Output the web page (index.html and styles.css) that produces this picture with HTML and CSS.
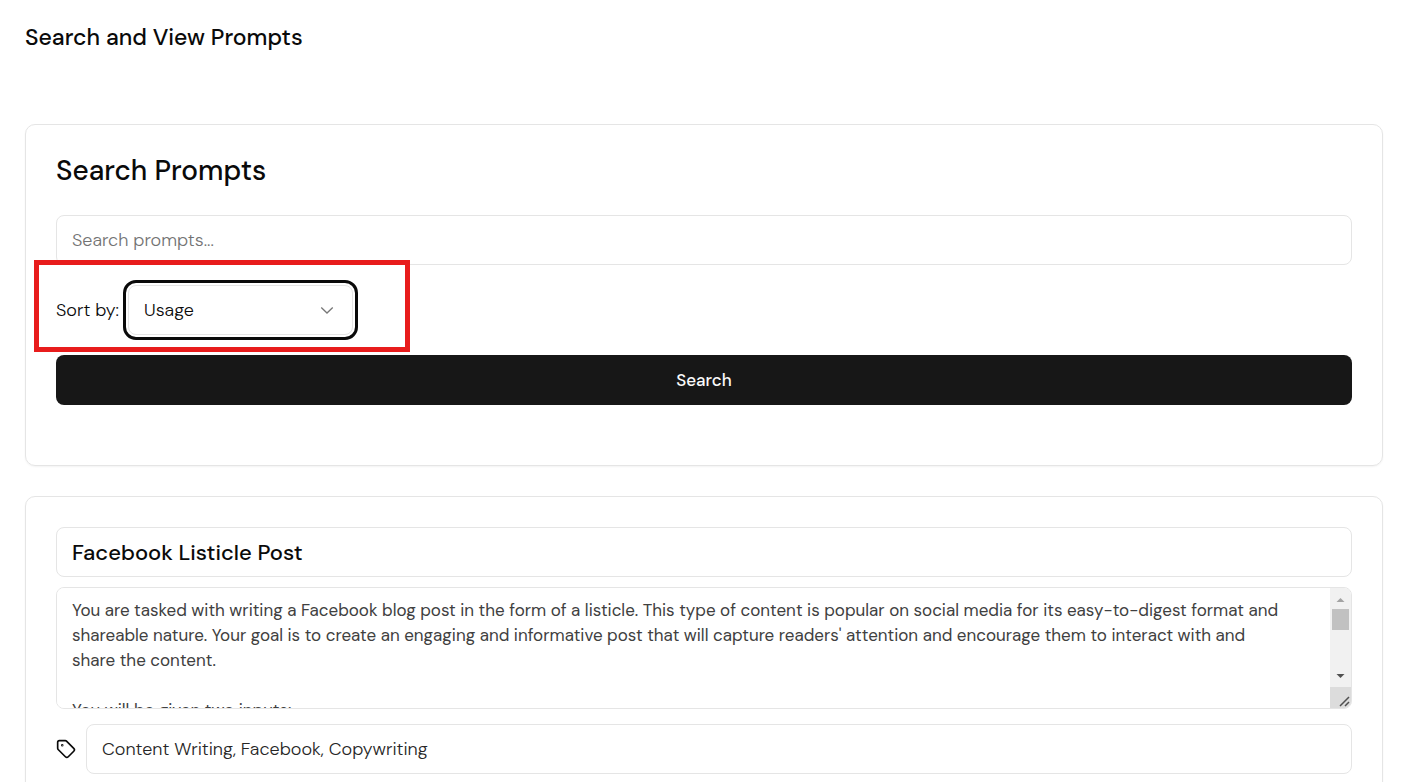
FILE: index.html
```html
<!DOCTYPE html>
<html lang="en">
<head>
<meta charset="UTF-8">
<meta name="viewport" content="width=device-width, initial-scale=1.0">
<link rel="stylesheet" href="styles.css">
<title>Search and View Prompts</title>
</head>
<body>
<h1 class="page-title">Search and View Prompts</h1>

<main class="cards">
  <form class="card search-card">
    <h2 class="card-title">Search Prompts</h2>
    <input class="field search-field" type="text" placeholder="Search prompts..." aria-label="Search prompts">
    <div class="sort-row">
      <label for="sort">Sort by:</label>
      <div class="select-wrap">
        <select id="sort" class="field sort-select">
          <option>Usage</option>
          <option>Name</option>
        </select>
        <svg class="chevron" viewBox="0 0 15 15" aria-hidden="true"><path d="M3.2 5.7 L7.5 9.8 L11.8 5.7" fill="none" stroke="currentColor"/></svg>
      </div>
      <div class="highlight"></div>
    </div>
    <button class="search-button" type="button">Search</button>
  </form>

  <section class="card prompt-card">
    <input class="field prompt-title" type="text" value="Facebook Listicle Post" aria-label="Prompt title">
    <div class="prompt-box">
      <textarea class="prompt-text" aria-label="Prompt text">You are tasked with writing a Facebook blog post in the form of a listicle. This type of content is popular on social media for its easy-to-digest format and shareable nature. Your goal is to create an engaging and informative post that will capture readers' attention and encourage them to interact with and share the content.

You will be given two inputs:</textarea>
      <div class="scrollbar" aria-hidden="true">
        <svg class="arrow-up" viewBox="0 0 21 21"><path d="M6.5 14 L10.5 10 L14.5 14z"/></svg>
        <div class="thumb"></div>
        <svg class="arrow-down" viewBox="0 0 21 21"><path d="M6.5 8 L14.5 8 L10.5 12z"/></svg>
        <svg class="grip" viewBox="0 0 21 21"><path d="M10 19 L19 10 M15 19 L19 15"/></svg>
      </div>
    </div>
    <div class="tag-row">
      <svg class="tag-icon" viewBox="0 0 24 24" aria-hidden="true">
        <path d="M12.586 2.586A2 2 0 0 0 11.172 2H4a2 2 0 0 0-2 2v7.172a2 2 0 0 0 .586 1.414l8.704 8.704a2.426 2.426 0 0 0 3.42 0l6.58-6.58a2.426 2.426 0 0 0 0-3.42z"/>
        <circle cx="7.5" cy="7.5" r=".5"/>
      </svg>
      <input class="field tag-field" type="text" value="Content Writing, Facebook, Copywriting" aria-label="Tags">
    </div>
  </section>
</main>
</body>
</html>
```
FILE: styles.css
```css
* {
  box-sizing: border-box;
}
html {
  overflow: hidden;
}
body {
  margin: 0;
  padding: 20px 18px 0 25px;
  font-family: "DM Sans", Inter, "Liberation Sans", sans-serif;
  font-size: 18px;
  line-height: 25px;
  color: #0a0a0a;
  background: #fff;
}
.page-title {
  margin: 0 0 70px;
  font-size: 23px;
  line-height: 34px;
  font-weight: 500;
}
.cards {
  display: flex;
  flex-direction: column;
  gap: 30px;
}
.card {
  display: flex;
  flex-direction: column;
  padding: 30px;
  border: 1px solid #e5e5e5;
  border-radius: 10px;
  box-shadow: 0 1px 2px rgba(0, 0, 0, 0.05);
}
.search-card {
  padding-bottom: 60px;
}
.card-title {
  margin: 0 0 28px;
  font-size: 28px;
  line-height: 32px;
  font-weight: 500;
}
.field {
  width: 100%;
  height: 50px;
  padding: 0 15px;
  border: 1px solid #e5e5e5;
  border-radius: 8px;
  font: inherit;
  font-weight: 300;
  color: #0a0a0a;
  background: #fff;
}
.field::placeholder {
  color: #737373;
}
.sort-row {
  position: relative;
  display: flex;
  align-items: center;
  gap: 9px;
  margin: 20px 0;
  font-weight: 300;
}
.select-wrap {
  display: grid;
  align-items: center;
  width: 225px;
}
.sort-select {
  grid-area: 1 / 1;
  appearance: none;
  outline: 3px solid #0a0a0a;
  outline-offset: 2px;
}
.chevron {
  grid-area: 1 / 1;
  justify-self: end;
  width: 20px;
  height: 20px;
  margin-right: 16px;
  color: #777;
  pointer-events: none;
}
/* red frame around the sort control */
.highlight {
  position: absolute;
  top: -25px;
  left: -22px;
  width: 376px;
  height: 92px;
  border: 5px solid #e81c1c;
  pointer-events: none;
}
.search-button {
  height: 50px;
  border: 0;
  border-radius: 8px;
  font: inherit;
  font-size: 17px;
  font-weight: 500;
  color: #fafafa;
  background: #171717;
}
.prompt-title {
  font-size: 22px;
  font-weight: 500;
}
.prompt-box {
  display: flex;
  height: 122px;
  margin: 10px 0 15px;
  border: 1px solid #e5e5e5;
  border-radius: 8px;
  overflow: hidden;
}
.prompt-text {
  flex: 1;
  padding: 10px 45px 10px 15px;
  border: 0;
  font: inherit;
  font-size: 17px;
  color: #404040;
  resize: none;
}
.tag-field {
  color: #262626;
}
.scrollbar {
  display: flex;
  flex-direction: column;
  width: 21px;
  background: #f1f1f1;
}
.scrollbar svg {
  flex: none;
  width: 21px;
  height: 21px;
}
.arrow-up {
  fill: #a3a3a3;
}
.arrow-down {
  margin-top: auto;
  fill: #505050;
}
.thumb {
  height: 21px;
  margin: 0 2px;
  background: #c1c1c1;
}
.grip {
  fill: none;
  stroke: #505050;
  stroke-width: 1.5;
  background: #dcdcdc;
}
.tag-row {
  display: flex;
  align-items: center;
  gap: 10px;
}
.tag-icon {
  flex: none;
  width: 20px;
  height: 20px;
  fill: none;
  stroke: #0a0a0a;
  stroke-width: 2;
  stroke-linecap: round;
  stroke-linejoin: round;
}
```
